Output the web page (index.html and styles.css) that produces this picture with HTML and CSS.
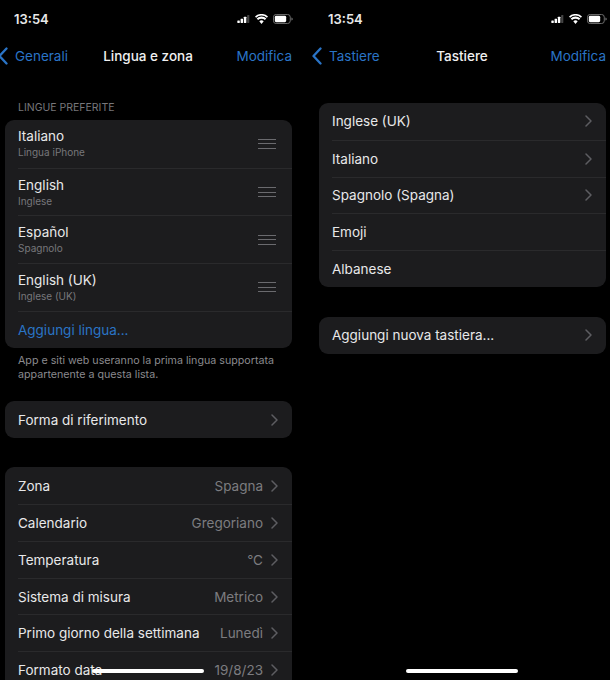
FILE: index.html
```html
<!DOCTYPE html>
<html lang="it">
<head>
<meta charset="UTF-8">
<meta name="viewport" content="width=device-width, initial-scale=1.0">
<title>Lingua e zona</title>
<link rel="stylesheet" href="styles.css">
</head>
<body>

<svg class="defs" width="0" height="0">
  <symbol id="back" viewBox="0 0 10 18"><path d="M8.5 1.500 1.500 9l7 7.500" fill="none" stroke="currentColor" stroke-width="2.300" stroke-linecap="round" stroke-linejoin="round"/></symbol>
  <symbol id="chev" viewBox="0 0 7 12"><path d="M1 1l5 5-5 5" fill="none" stroke="currentColor" stroke-width="1.500" stroke-linecap="round" stroke-linejoin="round"/></symbol>
  <symbol id="signal" viewBox="0 0 17 11"><rect x="0" y="7.500" width="3.400" height="3.500" rx=".6" fill="#fff"/><rect x="4.500" y="5" width="3.400" height="6" rx=".6" fill="#fff"/><rect x="9" y="2.500" width="3.400" height="8.500" rx=".6" fill="#fff"/><rect x="13.500" y="0" width="3" height="11" rx=".6" fill="#444"/></symbol>
  <symbol id="wifi" viewBox="0 0 16 12"><path d="M8 12 5.300 8.900a3.800 3.800 0 0 1 5.400 0zM3.800 7.300 2.100 5.300a8.400 8.400 0 0 1 11.800 0l-1.700 2a6 6 0 0 0-8.400 0zM1.400 4.500 0 3a11.400 11.400 0 0 1 16 0l-1.400 1.500a9.400 9.400 0 0 0-13.200 0z" fill="#fff"/></symbol>
  <symbol id="battery" viewBox="0 0 22 11"><rect x=".5" y=".5" width="18.500" height="10" rx="3" fill="none" stroke="#777"/><rect x="2" y="2" width="12.500" height="7" rx="1.500" fill="#fff"/><path d="M20.300 3.800c1 .3 1.400 1 1.400 1.700s-.4 1.400-1.400 1.700z" fill="#777"/></symbol>
</svg>

<div class="screens">

  <div class="phone">
    <div class="status">
      <span class="time">13:54</span>
      <span class="status-icons">
        <svg class="i-signal"><use href="#signal"/></svg>
        <svg class="i-wifi"><use href="#wifi"/></svg>
        <svg class="i-battery"><use href="#battery"/></svg>
      </span>
    </div>
    <div class="nav">
      <a class="back"><svg class="i-back"><use href="#back"/></svg>Generali</a>
      <span class="nav-title">Lingua e zona</span>
      <a class="edit">Modifica</a>
    </div>

    <div class="group-label">LINGUE PREFERITE</div>
    <div class="card">
      <div class="row lang"><div><div class="name">Italiano</div><div class="sub">Lingua iPhone</div></div><span class="grip"></span></div>
      <div class="row lang"><div><div class="name">English</div><div class="sub">Inglese</div></div><span class="grip"></span></div>
      <div class="row lang"><div><div class="name">Español</div><div class="sub">Spagnolo</div></div><span class="grip"></span></div>
      <div class="row lang"><div><div class="name">English (UK)</div><div class="sub">Inglese (UK)</div></div><span class="grip"></span></div>
      <div class="row add"><span class="link">Aggiungi lingua...</span></div>
    </div>
    <p class="note">App e siti web useranno la prima lingua supportata appartenente a questa lista.</p>

    <div class="card card-ref">
      <div class="row"><span>Forma di riferimento</span><svg class="i-chev"><use href="#chev"/></svg></div>
    </div>

    <div class="card card-zone">
      <div class="row"><span>Zona</span><span class="value">Spagna</span><svg class="i-chev"><use href="#chev"/></svg></div>
      <div class="row"><span>Calendario</span><span class="value">Gregoriano</span><svg class="i-chev"><use href="#chev"/></svg></div>
      <div class="row"><span>Temperatura</span><span class="value">°C</span><svg class="i-chev"><use href="#chev"/></svg></div>
      <div class="row"><span>Sistema di misura</span><span class="value">Metrico</span><svg class="i-chev"><use href="#chev"/></svg></div>
      <div class="row"><span>Primo giorno della settimana</span><span class="value">Lunedì</span><svg class="i-chev"><use href="#chev"/></svg></div>
      <div class="row"><span>Formato data</span><span class="value">19/8/23</span><svg class="i-chev"><use href="#chev"/></svg></div>
    </div>
    <div class="home"></div>
  </div>

  <div class="phone">
    <div class="status">
      <span class="time">13:54</span>
      <span class="status-icons">
        <svg class="i-signal"><use href="#signal"/></svg>
        <svg class="i-wifi"><use href="#wifi"/></svg>
        <svg class="i-battery"><use href="#battery"/></svg>
      </span>
    </div>
    <div class="nav">
      <a class="back"><svg class="i-back"><use href="#back"/></svg>Tastiere</a>
      <span class="nav-title">Tastiere</span>
      <a class="edit">Modifica</a>
    </div>

    <div class="card card-keys">
      <div class="row"><span>Inglese (UK)</span><svg class="i-chev"><use href="#chev"/></svg></div>
      <div class="row"><span>Italiano</span><svg class="i-chev"><use href="#chev"/></svg></div>
      <div class="row"><span>Spagnolo (Spagna)</span><svg class="i-chev"><use href="#chev"/></svg></div>
      <div class="row"><span>Emoji</span></div>
      <div class="row"><span>Albanese</span></div>
    </div>
    <div class="card card-new">
      <div class="row"><span>Aggiungi nuova tastiera...</span><svg class="i-chev"><use href="#chev"/></svg></div>
    </div>
    <div class="home"></div>
  </div>

</div>

</body>
</html>
```

FILE: styles.css
```css
html, body {
  margin: 0;
  height: 100%;
  background: #000;
  overflow: hidden;
}

body {
  font-family: Inter, "Liberation Sans", sans-serif;
  color: #e8e8e9;
}

.defs {
  position: absolute;
}

.screens {
  display: flex;
  width: 610px;
  height: 680px;
  overflow: hidden;
}

.phone {
  position: relative;
  flex: 0 0 314px;
  height: 680px;
}

/* status bar */
.status {
  display: flex;
  align-items: center;
  justify-content: space-between;
  height: 38px;
  width: 294px;
  padding: 0 1px 0 14px;
  box-sizing: border-box;
}

.time {
  font-size: 13px;
  font-weight: 600;
}

.status-icons {
  display: flex;
  align-items: center;
  gap: 5px;
}

.i-signal { width: 13px; height: 8px; }
.i-wifi { width: 13px; height: 10px; }
.i-battery { width: 20px; height: 10px; }

/* nav bar */
.nav {
  position: relative;
  display: flex;
  align-items: center;
  justify-content: space-between;
  height: 35px;
  width: 294px;
  margin-left: -2px;
  font-size: 13.500px;
}

.nav .back {
  display: flex;
  align-items: center;
  gap: 7px;
  color: #2a74c6;
}

.nav .edit {
  color: #2a74c6;
}

.nav-title {
  position: absolute;
  left: 6px;
  right: 0;
  text-align: center;
  font-weight: 500;
  color: #f0f0f1;
}

.i-back {
  width: 10px;
  height: 18px;
  color: #2a74c6;
}

/* lists */
.group-label {
  margin: 27px 0 0 18px;
  height: 20px;
  font-size: 10.500px;
  line-height: 16px;
  color: #77777b;
}

.card {
  width: 287px;
  margin-left: 5px;
  background: #1c1c1e;
  border-radius: 9px;
  overflow: hidden;
}

.row {
  display: flex;
  align-items: center;
  height: 36.800px;
  margin-left: 13px;
  padding-right: 14px;
  box-sizing: border-box;
  border-top: 1px solid #2a2a2c;
  font-size: 13.500px;
}

.row:first-child {
  border-top: 0;
}

.row > span:first-child {
  flex: 1;
}

.value {
  color: #7c7c80;
  margin-right: 8px;
}

.i-chev {
  width: 7px;
  height: 12px;
  color: #5d5d61;
}

.lang {
  height: 47.700px;
  justify-content: space-between;
  padding-right: 16px;
  padding-bottom: 1px;
}

.name {
  line-height: 18px;
}

.sub {
  margin-top: 1px;
  font-size: 10px;
  line-height: 13px;
  color: #77777b;
}

.grip {
  display: block;
  width: 18px;
  height: 8px;
  border-top: 1px solid #6a6a6e;
  border-bottom: 1px solid #6a6a6e;
  margin-top: 1px;
}

.grip::after {
  content: "";
  display: block;
  height: 1px;
  margin-top: 3.500px;
  background: #6a6a6e;
}

.add {
  height: 37.200px;
}

.link {
  color: #2a74c6;
}

.note {
  width: 262px;
  margin: 6px 0 0 18px;
  height: 40px;
  font-size: 10.700px;
  line-height: 14px;
  color: #8a8a8e;
}

.card-ref { margin-top: 7.500px; }
.card-zone { margin-top: 29px; }
.card-keys { margin-top: 30px; }
.card-new { margin-top: 30px; }

/* home indicator sits on top of the content */
.home {
  position: absolute;
  left: 92px;
  top: 669px;
  width: 112px;
  height: 4px;
  border-radius: 2px;
  background: #fff;
}
```
